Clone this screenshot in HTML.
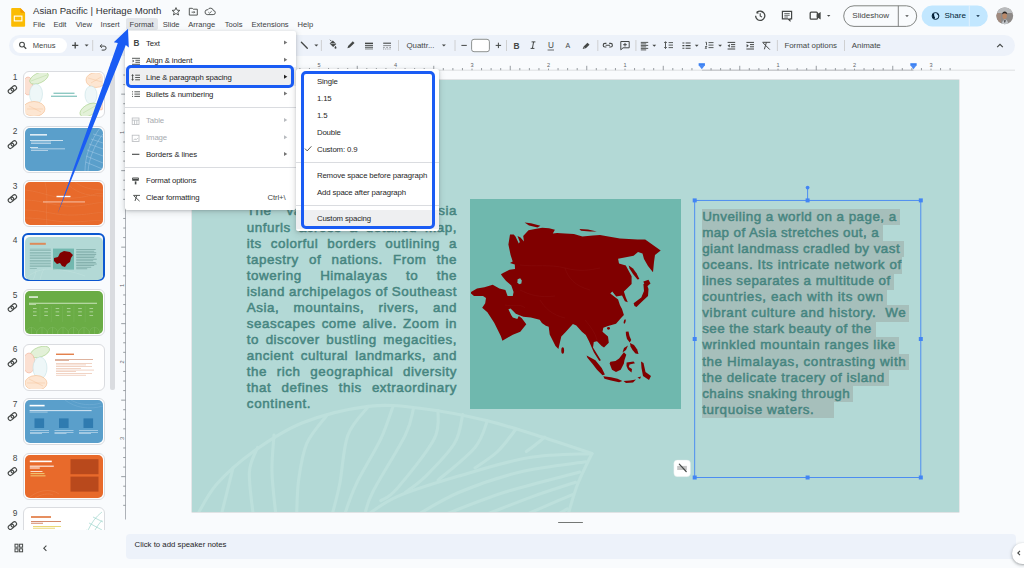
<!DOCTYPE html>
<html><head><meta charset="utf-8"><style>
*{box-sizing:border-box;margin:0;padding:0}
html,body{width:1024px;height:568px;overflow:hidden;background:#f9fbfd;font-family:"Liberation Sans",sans-serif;color:#3c4043;position:relative}
.a{position:absolute}
.t{position:absolute;white-space:pre;line-height:1}
svg{position:absolute;overflow:visible}

</style></head><body>
<!-- logo -->
<svg style="left:0;top:0" width="40" height="40" viewBox="0 0 40 40">
<path d="M12.2 8h8.1l4.8 4.8v13a1 1 0 0 1-1 1H12.2a1 1 0 0 1-1-1V9a1 1 0 0 1 1-1z" fill="#fbbc04"/>
<path d="M20.3 8l4.8 4.8h-3.8a1 1 0 0 1-1-1z" fill="#f29900"/>
<rect x="14.3" y="16.1" width="7.6" height="4.8" fill="none" stroke="#fff" stroke-width="1.1"/>
</svg>
<div class="t" style="left:33px;top:5.5px;font-size:9.6px;color:#303134">Asian Pacific | Heritage Month</div>
<!-- star folder cloud -->
<svg style="left:0;top:0" width="230" height="30" viewBox="0 0 230 30">
<path d="M176 7.6l1.1 2.6 2.8.2-2.1 1.8.7 2.8-2.5-1.5-2.5 1.5.7-2.8-2.1-1.8 2.8-.2z" fill="none" stroke="#444746" stroke-width="0.9" stroke-linejoin="round"/>
<path d="M189.3 8.3h3l.9.9h4.1v5.9h-8z" fill="none" stroke="#444746" stroke-width="0.9"/>
<path d="M191.6 12.2h3M193.8 11.2l1 1-1 1" fill="none" stroke="#444746" stroke-width="0.8"/>
<path d="M207.2 14.6h6a2 2 0 0 0 .2-4 3 3 0 0 0-5.6-.9 2.4 2.4 0 0 0-.6 4.9z" fill="none" stroke="#444746" stroke-width="0.9"/>
<path d="M208.4 12.2l1.2 1 2.1-2" fill="none" stroke="#444746" stroke-width="0.8"/>
</svg>
<!-- menu bar -->
<div class="a" style="left:126px;top:18.3px;width:32px;height:11.5px;background:#e3e6ea;border-radius:2px"></div>
<div class="t" style="left:33px;top:21px;font-size:7.6px;color:#3c4043">File</div>
<div class="t" style="left:53.4px;top:21px;font-size:7.6px;color:#3c4043">Edit</div>
<div class="t" style="left:75.7px;top:21px;font-size:7.6px;color:#3c4043">View</div>
<div class="t" style="left:100.6px;top:21px;font-size:7.6px;color:#3c4043">Insert</div>
<div class="t" style="left:129.6px;top:21px;font-size:7.6px;color:#3c4043">Format</div>
<div class="t" style="left:162.7px;top:21px;font-size:7.6px;color:#3c4043">Slide</div>
<div class="t" style="left:188.2px;top:21px;font-size:7.6px;color:#3c4043">Arrange</div>
<div class="t" style="left:224.8px;top:21px;font-size:7.6px;color:#3c4043">Tools</div>
<div class="t" style="left:251.5px;top:21px;font-size:7.6px;color:#3c4043">Extensions</div>
<div class="t" style="left:297.5px;top:21px;font-size:7.6px;color:#3c4043">Help</div>
<!-- right icons -->
<svg style="left:0;top:0" width="1024" height="35" viewBox="0 0 1024 35">
<g fill="none" stroke="#444746" stroke-width="1.3">
<path d="M755.6 15.8a4.6 4.6 0 1 0 1.4-3.3"/>
<path d="M757.5 11.3l-.6 1.5 1.6.4" stroke-width="1.1"/>
<path d="M760.2 13.3v2.7l1.8 1.1" stroke-width="1.1"/>
<path d="M782.4 11.4h9.2v7.4h-1.7v1.8l-1.9-1.8h-5.6z" stroke-width="1.2"/>
<path d="M784.3 13.6h5.4M784.3 15.3h5.4M784.3 17h3.6" stroke-width="0.8"/>
<rect x="810.2" y="12.2" width="7.2" height="7" rx="1"/>
<path d="M817.4 14.8l2.6-1.7v5.2l-2.6-1.7z" fill="#444746"/>
</g>
<path d="M827 15l1.7 1.7 1.7-1.7z" fill="#444746"/>
<rect x="843.7" y="5.8" width="73" height="20.6" rx="10.3" fill="none" stroke="#747775" stroke-width="0.9"/>
<line x1="898.3" y1="5.8" x2="898.3" y2="26.4" stroke="#747775" stroke-width="0.9"/>
<path d="M905.2 15.2l1.8 1.8 1.8-1.8z" fill="#444746"/>
<path d="M921.6 16a10.4 10.4 0 0 1 10.4-10.4h45.4a10.4 10.4 0 0 1 0 20.8H932a10.4 10.4 0 0 1-10.4-10.4z" fill="#c2e7ff"/>
<line x1="969.3" y1="5.6" x2="969.3" y2="26.4" stroke="#f9fbfd" stroke-width="0.9" opacity="0.6"/>
<path d="M976.2 15.2l1.8 1.8 1.8-1.8z" fill="#001d35"/>
<circle cx="935.5" cy="16" r="3.4" fill="none" stroke="#001d35" stroke-width="1"/><path d="M933 13.6c1 .3 1.4 1 1.2 1.8-.2.8.7 1.2.8 1.9.1.6-.3 1.3-.6 1.6l-1.6-1.2-.6-2.6zM937.6 13.2c-.6.6-.5 1.4.1 1.7.6.3 1.2.4 1.4 1.1" fill="#001d35"/>
<defs><clipPath id="av"><circle cx="1004.8" cy="15.8" r="8.4"/></clipPath></defs>
<g clip-path="url(#av)">
<rect x="996" y="7" width="18" height="18" fill="#8e8a88"/>
<rect x="996" y="7" width="18" height="6" fill="#b9bbbd"/>
<rect x="996" y="13" width="5" height="12" fill="#a08a7e"/>
<path d="M1001.5 25c.5-3.5 1.7-5.5 3.5-5.5s3.2 2 3.6 5.5z" fill="#c2c6ca"/>
<ellipse cx="1004.6" cy="16" rx="2.3" ry="3" fill="#b98868"/>
<path d="M1002.2 14.2c0-2 1.1-2.8 2.5-2.8s2.5.8 2.5 2.8c-.8-.6-1.6-.9-2.5-.9s-1.7.3-2.5.9z" fill="#2a2624"/>
<path d="M1003.6 20.2l1.2 3 1.2-3z" fill="#4a4a4c"/>
</g>
</svg>
<div class="t" style="left:852.3px;top:12.2px;font-size:8.1px;color:#444746">Slideshow</div>
<div class="t" style="left:944.4px;top:12.2px;font-size:8.1px;color:#001d35">Share</div>
<div class="a" style="left:9px;top:35px;width:1006px;height:21px;background:#edf2fa;border-radius:10.5px"></div>
<div class="a" style="left:13.3px;top:37.9px;width:53.3px;height:15px;background:#fff;border-radius:7.5px"></div>
<div class="t" style="left:32.7px;top:41.7px;font-size:7.6px;color:#444746">Menus</div>
<div class="t" style="left:784.4px;top:41.5px;font-size:7.9px;color:#444746">Format options</div>
<div class="t" style="left:851.8px;top:41.5px;font-size:7.9px;color:#444746">Animate</div>
<div class="t" style="left:406.4px;top:41.5px;font-size:7.9px;color:#444746">Quattr...</div>
<svg style="left:0;top:0" width="1024" height="60" viewBox="0 0 1024 60">
<g fill="none" stroke="#444746" stroke-width="1.1">
<circle cx="22" cy="44.6" r="2.4"/><path d="M23.8 46.4l2.4 2.4" stroke-width="1.3"/>
<path d="M72.1 45.4h6.2M75.2 42.3v6.2" stroke-width="1.3"/>
<path d="M100.5 46.1h3.6a2 2 0 0 1 0 4h-2.4" stroke-width="1"/>
<path d="M101.8 44.3l-1.6 1.8 1.6 1.8" stroke-width="1"/>
<path d="M301.4 42.3l5.9 5.9" stroke-width="1.3" stroke-linecap="round"/>
<path d="M329.6 43.6l3.2-3.2 3.5 3.5-3.2 3.2z" fill="#444746" stroke="none"/><path d="M331.4 41.2l-1.4-1.4" stroke-width="0.9"/><path d="M330.6 43.6h5" stroke="#edf2fa" stroke-width="0.6"/>
<path d="M347.4 48.3l.7-2.4 4.7-4.7 1.7 1.7-4.7 4.7z" fill="#444746" stroke="none"/>
<path d="M365 43.4h8" stroke-width="1.5"/><path d="M365 45.7h8" stroke-width="1.1"/><path d="M365 47.6h8" stroke-width="0.8"/><path d="M365 49h8" stroke-width="0.6"/>
<path d="M383.2 43.2h7.8" stroke-width="1.1"/><path d="M383.2 45.6h7.8M383.2 47.4h1.5M386.3 47.4h1.5M389.4 47.4h1.5M383.2 49h1M385.3 49h1M387.4 49h1M389.5 49h1" stroke-width="0.6"/>
<path d="M461.4 45.4h5.4M495.7 45.4h5.4M498.4 42.7v5.4" stroke-width="1"/>
</g>
<g fill="#444746">
<path d="M84.6 44.4h4l-2 2z"/>
<path d="M314.3 44.4h4l-2 2z"/>
<path d="M335.5 45.8c.7.9 1 1.5 1 1.9a1 1 0 0 1-2 0c0-.4.3-1 1-1.9z"/>
<path d="M441.9 44.4h4l-2 2z"/>
<path d="M652.4 44.8h3.8l-1.9 1.9z"/>
<path d="M694.8 44.8h3.8l-1.9 1.9z"/>
<path d="M718.2 44.8h3.8l-1.9 1.9z"/>
</g>
<rect x="471.6" y="39.3" width="17.8" height="12.4" rx="2.4" fill="#fff" stroke="#747775" stroke-width="0.8"/>
<g stroke="#c7c7c7" stroke-width="0.8"><line x1="92.7" y1="40" x2="92.7" y2="51"/><line x1="321.4" y1="40" x2="321.4" y2="51"/><line x1="398.5" y1="40" x2="398.5" y2="51"/><line x1="455" y1="40" x2="455" y2="51"/><line x1="506.5" y1="40" x2="506.5" y2="51"/><line x1="597.8" y1="40" x2="597.8" y2="51"/><line x1="635.9" y1="40" x2="635.9" y2="51"/><line x1="777.4" y1="40" x2="777.4" y2="51"/><line x1="844.5" y1="40" x2="844.5" y2="51"/></g>
<text x="513.6" y="48.8" font-family="Liberation Sans" font-weight="bold" font-size="8.4" fill="#444746">B</text>
<path d="M531.6 41.9h3.8M530.6 48.4h3.8M533.6 41.9l-1.2 6.5" fill="none" stroke="#444746" stroke-width="1"/>
<text x="548" y="48" font-family="Liberation Sans" font-size="8.2" fill="#444746">U</text>
<line x1="547.6" y1="50" x2="554" y2="50" stroke="#444746" stroke-width="0.8"/>
<text x="565.6" y="47.6" font-family="Liberation Sans" font-size="7" fill="#444746">A</text>
<g fill="none" stroke="#444746" stroke-width="1">
<path d="M583.6 46.6l3.9-3.9 2 2-3.9 3.9z" fill="#444746" stroke="none"/><path d="M583.6 46.6l-.9 2.5 2.5-.9" fill="#444746" stroke="none"/>
<path d="M606.4 43.4h-1.4a1.8 1.8 0 0 0 0 3.6h1.4M609.2 43.4h1.4a1.8 1.8 0 0 1 0 3.6h-1.4M605.6 45.2h4.4" stroke-width="1.1"/>
<path d="M620.8 41.5h8.4v6.3h-6.2l-2.2 2z"/><path d="M625 42.9v3.6M623.2 44.7h3.6"/>
<path d="M640.8 42.4h7.4M640.8 43.9h5.4M640.8 45.4h7.4M640.8 46.9h5.4M640.8 48.4h7.4M640.8 49.9h5.4" stroke-width="0.9"/>
<path d="M665.5 41.8v6.6M664.2 43l1.3-1.3 1.3 1.3M664.2 47.2l1.3 1.3 1.3-1.3M668.6 42.6h4.4M668.6 45.1h4.4M668.6 47.6h4.4" stroke-width="0.9"/>
<path d="M682.4 43h2M682.4 45.6h2M682.4 48.2h2M685.6 43h5M685.6 45.6h5M685.6 48.2h5" stroke-width="1.1"/>
<path d="M705.5 42.3h1v3M705.2 46.5h1.6l-1.6 1.8h1.6M708.5 42.6h5M708.5 45.1h5M708.5 47.6h5" stroke-width="0.9"/>
<path d="M727.6 42.4h7.6M731 44.6h4.2M731 46.8h4.2M727.6 49h7.6" stroke-width="1"/><path d="M729.8 44l-2.2 1.7 2.2 1.7z" fill="#444746" stroke="none"/>
<path d="M746.4 42.4h7.6M750 44.6h4M750 46.8h4M746.4 49h7.6" stroke-width="1"/><path d="M746.6 44l2.2 1.7-2.2 1.7z" fill="#444746" stroke="none"/>
<path d="M762.5 42.3h7.8M766.4 42.3l-2 7M763 42.8l6.8 6.8" stroke-width="1"/>
<path d="M997.2 47.2l2.8-2.8 2.8 2.8" stroke-width="1.2"/>
</g>
</svg>
<div class="a" style="left:0;top:62px;width:110px;height:467.5px;overflow:hidden">
<div class="t" style="left:9.5px;top:10.5px;font-size:8.4px;color:#444746;width:8px;text-align:right">1</div>
<div class="a" style="left:0;top:9.2px;width:30px;height:30px"><svg style="left:0;top:0" width="30" height="30"><g transform="translate(12.4 18.6) rotate(-40)" fill="none" stroke="#444746" stroke-width="1.1"><rect x="-4.8" y="-2.1" width="6" height="4.2" rx="2.1"/><rect x="-1.2" y="-2.1" width="6" height="4.2" rx="2.1"/></g></svg></div>
<div class="a" style="left:22.9px;top:9.2px;width:81.7px;height:47.3px;border:1px solid #dadce0;border-radius:6px;background:#fff"></div>
<div class="a" style="left:24.8px;top:11.2px;width:77.8px;height:43.3px;border-radius:5px;overflow:hidden" id="th1"><div class="a" style="left:0;top:0;width:77.8px;height:43.3px;background:#fff"></div>
<svg style="left:0;top:0" width="77.8" height="43.3" viewBox="0 0 77.8 43.3">
<g stroke-width="0.5">
<ellipse cx="3" cy="13" rx="5" ry="9" fill="#fbe0d2" stroke="#f0a58a"/>
<ellipse cx="14" cy="5" rx="10" ry="5" fill="#e3f1d8" stroke="#9ccb7a" transform="rotate(-25 14 5)"/>
<ellipse cx="11" cy="21" rx="6.5" ry="10" fill="#eef7f8" stroke="#bcdde0"/>
<ellipse cx="9" cy="36" rx="11" ry="7.5" fill="#fde6d2" stroke="#f2b17a"/>
<ellipse cx="71" cy="7" rx="10" ry="7.5" fill="#fde6d2" stroke="#f2b17a"/>
<ellipse cx="66" cy="22" rx="6" ry="9" fill="#eef7f8" stroke="#bcdde0"/>
<ellipse cx="64" cy="37" rx="10" ry="5.5" fill="#e3f1d8" stroke="#9ccb7a" transform="rotate(-30 64 37)"/>
<ellipse cx="76" cy="31" rx="3" ry="6" fill="#fbe0d2" stroke="#f0a58a"/>
</g>
<g fill="none" stroke="#f2b17a" stroke-width="0.3"><path d="M2 36h16M4 33l12 6M63 5l14 4M66 10l10-6"/></g>
<g fill="none" stroke="#9ccb7a" stroke-width="0.3"><path d="M6 8l16-6M58 40l14-8"/></g>
<rect x="28.5" y="19.6" width="21" height="1.4" fill="#8fc9c3"/>
<rect x="26" y="22.6" width="26" height="1.4" fill="#8fc9c3"/>
</svg></div>
<div class="t" style="left:9.5px;top:65.0px;font-size:8.4px;color:#444746;width:8px;text-align:right">2</div>
<div class="a" style="left:0;top:63.7px;width:30px;height:30px"><svg style="left:0;top:0" width="30" height="30"><g transform="translate(12.4 18.6) rotate(-40)" fill="none" stroke="#444746" stroke-width="1.1"><rect x="-4.8" y="-2.1" width="6" height="4.2" rx="2.1"/><rect x="-1.2" y="-2.1" width="6" height="4.2" rx="2.1"/></g></svg></div>
<div class="a" style="left:22.9px;top:63.7px;width:81.7px;height:47.3px;border:1px solid #dadce0;border-radius:6px;background:#fff"></div>
<div class="a" style="left:24.8px;top:65.7px;width:77.8px;height:43.3px;border-radius:5px;overflow:hidden" id="th2"><div class="a" style="left:0;top:0;width:77.8px;height:43.3px;background:#5a9fcb"></div>
<svg style="left:0;top:0" width="77.8" height="43.3" viewBox="0 0 77.8 43.3">
<g fill="none" stroke="#a6cde8" stroke-width="0.5"><path d="M60 43.3C60 28 66 12 75 0M63 43.3C64 30 70 16 78 6M68 6l10 3M66 11l12 4M64 16l14 5M62 22l16 6M61 28l17 7M60.5 34l17 7"/></g>
<rect x="5" y="6.2" width="17" height="1.3" fill="#fff"/>
<rect x="5" y="12" width="33" height="0.7" fill="#fff"/>
<rect x="6" y="13.7" width="20" height="0.6" fill="#e8f1f8"/>
<rect x="6" y="15.2" width="20" height="0.6" fill="#e8f1f8"/>
<rect x="5" y="19" width="8" height="0.7" fill="#fff"/>
<rect x="6" y="20.6" width="34" height="0.6" fill="#e8f1f8"/>
<rect x="6" y="22.1" width="17" height="0.6" fill="#e8f1f8"/>
</svg></div>
<div class="t" style="left:9.5px;top:119.5px;font-size:8.4px;color:#444746;width:8px;text-align:right">3</div>
<div class="a" style="left:0;top:118.2px;width:30px;height:30px"><svg style="left:0;top:0" width="30" height="30"><g transform="translate(12.4 18.6) rotate(-40)" fill="none" stroke="#444746" stroke-width="1.1"><rect x="-4.8" y="-2.1" width="6" height="4.2" rx="2.1"/><rect x="-1.2" y="-2.1" width="6" height="4.2" rx="2.1"/></g></svg></div>
<div class="a" style="left:22.9px;top:118.2px;width:81.7px;height:47.3px;border:1px solid #dadce0;border-radius:6px;background:#fff"></div>
<div class="a" style="left:24.8px;top:120.2px;width:77.8px;height:43.3px;border-radius:5px;overflow:hidden" id="th3"><div class="a" style="left:0;top:0;width:77.8px;height:43.3px;background:#e86a2b"></div>
<svg style="left:0;top:0" width="77.8" height="43.3" viewBox="0 0 77.8 43.3">
<g fill="none" stroke="#ec8450" stroke-width="0.35"><path d="M20 0C24 15 20 30 22 43M0 8c20 2 30 10 50 8s20-6 28-4M0 18c18 0 34 8 52 6s20-4 26-3M0 28c20 0 30 6 50 5s20-3 28-2M0 36c20 0 34 5 50 4s20-2 28-1M40 0c10 10 20 14 38 14M50 0c8 6 18 8 28 8"/></g>
<rect x="31.5" y="13.8" width="14" height="1.4" fill="#fff"/>
<rect x="18" y="19.6" width="42" height="0.7" fill="#fde7dc"/>
</svg></div>
<div class="t" style="left:9.5px;top:174.0px;font-size:8.4px;color:#444746;width:8px;text-align:right">4</div>
<div class="a" style="left:22.2px;top:171.3px;width:82.8px;height:48.1px;border:2px solid #0b57d0;border-radius:6px"></div>
<div class="a" style="left:24.8px;top:174.7px;width:77.8px;height:43.3px;border-radius:5px;overflow:hidden" id="th4"><div class="a" style="left:0;top:0;width:77.8px;height:43.3px;background:#b3d9d6"></div>
<svg style="left:0;top:0" width="77.8" height="43.3" viewBox="0 0 77.8 43.3">
<rect x="4.8" y="5.8" width="16" height="2" fill="#dd8a5a"/>
<g fill="#7aa8a4"><rect x="4.8" y="11.8" width="21" height="0.6"/><rect x="4.8" y="13.4" width="21" height="0.6"/><rect x="4.8" y="15.0" width="21" height="0.6"/><rect x="4.8" y="16.6" width="21" height="0.6"/><rect x="4.8" y="18.2" width="21" height="0.6"/><rect x="4.8" y="19.8" width="21" height="0.6"/><rect x="4.8" y="21.4" width="21" height="0.6"/><rect x="4.8" y="23.0" width="21" height="0.6"/><rect x="4.8" y="24.6" width="21" height="0.6"/><rect x="4.8" y="26.2" width="21" height="0.6"/><rect x="4.8" y="27.8" width="21" height="0.6"/><rect x="4.8" y="29.4" width="21" height="0.6"/><rect x="4.8" y="31.0" width="7" height="0.6"/><rect x="51.2" y="12.2" width="19.5" height="0.8"/><rect x="51.2" y="13.8" width="18" height="0.8"/><rect x="51.2" y="15.4" width="20" height="0.8"/><rect x="51.2" y="17.0" width="20" height="0.8"/><rect x="51.2" y="18.6" width="19" height="0.8"/><rect x="51.2" y="20.2" width="18" height="0.8"/><rect x="51.2" y="21.8" width="20.5" height="0.8"/><rect x="51.2" y="23.4" width="17" height="0.8"/><rect x="51.2" y="25.0" width="19.5" height="0.8"/><rect x="51.2" y="26.6" width="20.5" height="0.8"/><rect x="51.2" y="28.2" width="18" height="0.8"/><rect x="51.2" y="29.8" width="15" height="0.8"/><rect x="51.2" y="31.4" width="11" height="0.8"/></g>
<rect x="28" y="11.6" width="21" height="21" fill="#72b8af"/>
<path d="M29 21l4-1 2-4 4-2 6 1 3 3-2 3-1 4-3 2-2 3-3-1-2-3-3 1-3-3z" fill="#800000"/>
<g fill="none" stroke="#c2e2df" stroke-width="0.5"><path d="M0 43C5 36 15 32 25 32s25 3 35 7M8 43c2-4 3-8 3-11M15 43c1-4 2-8 4-11"/></g>
</svg></div>
<div class="t" style="left:9.5px;top:228.5px;font-size:8.4px;color:#444746;width:8px;text-align:right">5</div>
<div class="a" style="left:0;top:227.2px;width:30px;height:30px"><svg style="left:0;top:0" width="30" height="30"><g transform="translate(12.4 18.6) rotate(-40)" fill="none" stroke="#444746" stroke-width="1.1"><rect x="-4.8" y="-2.1" width="6" height="4.2" rx="2.1"/><rect x="-1.2" y="-2.1" width="6" height="4.2" rx="2.1"/></g></svg></div>
<div class="a" style="left:22.9px;top:227.2px;width:81.7px;height:47.3px;border:1px solid #dadce0;border-radius:6px;background:#fff"></div>
<div class="a" style="left:24.8px;top:229.2px;width:77.8px;height:43.3px;border-radius:5px;overflow:hidden" id="th5"><div class="a" style="left:0;top:0;width:77.8px;height:43.3px;background:#6aac45"></div>
<svg style="left:0;top:0" width="77.8" height="43.3" viewBox="0 0 77.8 43.3">
<rect x="4" y="5.4" width="9" height="1.3" fill="#fff"/>
<rect x="4" y="11.8" width="68" height="0.8" fill="#e4f2dc"/>
<rect x="4" y="13.2" width="7" height="0.6" fill="#e4f2dc"/>
<rect x="8.0" y="17.0" width="3.6" height="0.6" fill="#d6ebca"/><rect x="8.0" y="20.6" width="3.6" height="0.6" fill="#d6ebca"/><rect x="8.0" y="24.2" width="3.6" height="0.6" fill="#d6ebca"/><rect x="19.3" y="17.0" width="3.6" height="0.6" fill="#d6ebca"/><rect x="19.3" y="20.6" width="3.6" height="0.6" fill="#d6ebca"/><rect x="19.3" y="24.2" width="3.6" height="0.6" fill="#d6ebca"/><rect x="30.6" y="17.0" width="3.6" height="0.6" fill="#d6ebca"/><rect x="30.6" y="20.6" width="3.6" height="0.6" fill="#d6ebca"/><rect x="30.6" y="24.2" width="3.6" height="0.6" fill="#d6ebca"/><rect x="41.9" y="17.0" width="3.6" height="0.6" fill="#d6ebca"/><rect x="41.9" y="20.6" width="3.6" height="0.6" fill="#d6ebca"/><rect x="41.9" y="24.2" width="3.6" height="0.6" fill="#d6ebca"/><rect x="53.2" y="17.0" width="3.6" height="0.6" fill="#d6ebca"/><rect x="53.2" y="20.6" width="3.6" height="0.6" fill="#d6ebca"/><rect x="53.2" y="24.2" width="3.6" height="0.6" fill="#d6ebca"/><rect x="64.5" y="17.0" width="3.6" height="0.6" fill="#d6ebca"/><rect x="64.5" y="20.6" width="3.6" height="0.6" fill="#d6ebca"/><rect x="64.5" y="24.2" width="3.6" height="0.6" fill="#d6ebca"/><line x1="15.0" y1="15" x2="15.0" y2="31" stroke="#86bd68" stroke-width="0.3"/><line x1="26.3" y1="15" x2="26.3" y2="31" stroke="#86bd68" stroke-width="0.3"/><line x1="37.6" y1="15" x2="37.6" y2="31" stroke="#86bd68" stroke-width="0.3"/><line x1="48.9" y1="15" x2="48.9" y2="31" stroke="#86bd68" stroke-width="0.3"/><line x1="60.2" y1="15" x2="60.2" y2="31" stroke="#86bd68" stroke-width="0.3"/>
<g fill="none" stroke="#8cc36e" stroke-width="0.4"><path d="M1.0 43.3c0-4 3-7 5.5-7s5.5 3 5.5 7M6.5 36.3v7"/><path d="M11.5 43.3c0-4 3-7 5.5-7s5.5 3 5.5 7M17.0 36.3v7"/><path d="M22.0 43.3c0-4 3-7 5.5-7s5.5 3 5.5 7M27.5 36.3v7"/><path d="M32.5 43.3c0-4 3-7 5.5-7s5.5 3 5.5 7M38.0 36.3v7"/><path d="M43.0 43.3c0-4 3-7 5.5-7s5.5 3 5.5 7M48.5 36.3v7"/><path d="M53.5 43.3c0-4 3-7 5.5-7s5.5 3 5.5 7M59.0 36.3v7"/><path d="M64.0 43.3c0-4 3-7 5.5-7s5.5 3 5.5 7M69.5 36.3v7"/><path d="M74.5 43.3c0-4 3-7 5.5-7s5.5 3 5.5 7M80.0 36.3v7"/></g>
</svg></div>
<div class="t" style="left:9.5px;top:283.0px;font-size:8.4px;color:#444746;width:8px;text-align:right">6</div>
<div class="a" style="left:0;top:281.7px;width:30px;height:30px"><svg style="left:0;top:0" width="30" height="30"><g transform="translate(12.4 18.6) rotate(-40)" fill="none" stroke="#444746" stroke-width="1.1"><rect x="-4.8" y="-2.1" width="6" height="4.2" rx="2.1"/><rect x="-1.2" y="-2.1" width="6" height="4.2" rx="2.1"/></g></svg></div>
<div class="a" style="left:22.9px;top:281.7px;width:81.7px;height:47.3px;border:1px solid #dadce0;border-radius:6px;background:#fff"></div>
<div class="a" style="left:24.8px;top:283.7px;width:77.8px;height:43.3px;border-radius:5px;overflow:hidden" id="th6"><div class="a" style="left:0;top:0;width:77.8px;height:43.3px;background:#fff"></div>
<svg style="left:0;top:0" width="77.8" height="43.3" viewBox="0 0 77.8 43.3">
<g stroke-width="0.5">
<ellipse cx="15" cy="6" rx="10" ry="5" fill="#e3f1d8" stroke="#9ccb7a" transform="rotate(-20 15 6)"/>
<ellipse cx="4" cy="17" rx="6" ry="10" fill="#fbe0d2" stroke="#f0a58a"/>
<ellipse cx="15" cy="22" rx="7" ry="11" fill="#eef7f8" stroke="#bcdde0"/>
<ellipse cx="11" cy="37" rx="11" ry="7.5" fill="#fde6d2" stroke="#f2b17a"/>
</g>
<g fill="none" stroke="#f2b17a" stroke-width="0.3"><path d="M2 37h18M4 33l14 7"/></g>
<rect x="31" y="7.6" width="18" height="1.3" fill="#e0743a"/>
<rect x="30" y="13" width="38" height="0.6" fill="#c8805f"/>
<rect x="30" y="14.3" width="14" height="0.6" fill="#c8805f"/>
<rect x="31" y="17.0" width="36" height="0.5" fill="#e3a88a"/><rect x="31" y="18.7" width="30" height="0.5" fill="#e3a88a"/><rect x="31" y="20.4" width="36" height="0.5" fill="#e3a88a"/><rect x="31" y="22.1" width="25" height="0.5" fill="#e3a88a"/><rect x="31" y="23.8" width="38" height="0.5" fill="#e3a88a"/><rect x="31" y="25.5" width="20" height="0.5" fill="#e3a88a"/><rect x="31" y="27.2" width="36" height="0.5" fill="#e3a88a"/><rect x="31" y="28.9" width="30" height="0.5" fill="#e3a88a"/>
</svg></div>
<div class="t" style="left:9.5px;top:337.5px;font-size:8.4px;color:#444746;width:8px;text-align:right">7</div>
<div class="a" style="left:0;top:336.2px;width:30px;height:30px"><svg style="left:0;top:0" width="30" height="30"><g transform="translate(12.4 18.6) rotate(-40)" fill="none" stroke="#444746" stroke-width="1.1"><rect x="-4.8" y="-2.1" width="6" height="4.2" rx="2.1"/><rect x="-1.2" y="-2.1" width="6" height="4.2" rx="2.1"/></g></svg></div>
<div class="a" style="left:22.9px;top:336.2px;width:81.7px;height:47.3px;border:1px solid #dadce0;border-radius:6px;background:#fff"></div>
<div class="a" style="left:24.8px;top:338.2px;width:77.8px;height:43.3px;border-radius:5px;overflow:hidden" id="th7"><div class="a" style="left:0;top:0;width:77.8px;height:43.3px;background:#5a9fcb"></div>
<svg style="left:0;top:0" width="77.8" height="43.3" viewBox="0 0 77.8 43.3">
<g fill="none" stroke="#84b8dc" stroke-width="0.4"><path d="M40 0c10 8 25 10 38 6M46 0c8 5 20 6 30 3"/></g>
<rect x="4.6" y="4.8" width="15" height="1.6" fill="#fff"/>
<rect x="4.6" y="10.2" width="62" height="0.9" fill="#e8f1f8"/>
<rect x="4.6" y="11.8" width="18" height="0.5" fill="#e8f1f8"/>
<rect x="9.5" y="18.4" width="9.6" height="9.6" fill="#2f7bb0"/>
<rect x="34" y="18.4" width="9.6" height="9.6" fill="#2f7bb0"/>
<rect x="58.5" y="18.4" width="9.6" height="9.6" fill="#2f7bb0"/>
<rect x="5.0" y="30.5" width="19" height="0.5" fill="#e8f1f8"/><rect x="5.0" y="32.0" width="19" height="0.5" fill="#e8f1f8"/><rect x="5.0" y="33.5" width="12" height="0.5" fill="#e8f1f8"/><rect x="29.5" y="30.5" width="19" height="0.5" fill="#e8f1f8"/><rect x="29.5" y="32.0" width="19" height="0.5" fill="#e8f1f8"/><rect x="29.5" y="33.5" width="12" height="0.5" fill="#e8f1f8"/><rect x="54.0" y="30.5" width="19" height="0.5" fill="#e8f1f8"/><rect x="54.0" y="32.0" width="19" height="0.5" fill="#e8f1f8"/><rect x="54.0" y="33.5" width="12" height="0.5" fill="#e8f1f8"/>
</svg></div>
<div class="t" style="left:9.5px;top:392.0px;font-size:8.4px;color:#444746;width:8px;text-align:right">8</div>
<div class="a" style="left:0;top:390.7px;width:30px;height:30px"><svg style="left:0;top:0" width="30" height="30"><g transform="translate(12.4 18.6) rotate(-40)" fill="none" stroke="#444746" stroke-width="1.1"><rect x="-4.8" y="-2.1" width="6" height="4.2" rx="2.1"/><rect x="-1.2" y="-2.1" width="6" height="4.2" rx="2.1"/></g></svg></div>
<div class="a" style="left:22.9px;top:390.7px;width:81.7px;height:47.3px;border:1px solid #dadce0;border-radius:6px;background:#fff"></div>
<div class="a" style="left:24.8px;top:392.7px;width:77.8px;height:43.3px;border-radius:5px;overflow:hidden" id="th8"><div class="a" style="left:0;top:0;width:77.8px;height:43.3px;background:#e86a2b"></div>
<svg style="left:0;top:0" width="77.8" height="43.3" viewBox="0 0 77.8 43.3">
<rect x="4.8" y="5.6" width="22" height="1.6" fill="#fff"/>
<rect x="4.8" y="10.6" width="24" height="1.2" fill="#fde7dc"/>
<rect x="4.8" y="12.4" width="10" height="1.2" fill="#fde7dc"/>
<rect x="5.5" y="16" width="12" height="0.9" fill="#fde7dc"/>
<rect x="5.5" y="18.2" width="14" height="0.9" fill="#f3d57a"/>
<rect x="5.5" y="20.4" width="15" height="0.9" fill="#f3d57a"/>
<rect x="45.5" y="4.2" width="28" height="15" fill="#b9491c"/>
<rect x="45.5" y="21.6" width="28" height="15" fill="#b9491c"/>
<g fill="none" stroke="#ee8a55" stroke-width="0.4"><path d="M4 43c8-8 22-10 30-4M10 43c6-4 14-5 18-3"/></g>
</svg></div>
<div class="t" style="left:9.5px;top:446.5px;font-size:8.4px;color:#444746;width:8px;text-align:right">9</div>
<div class="a" style="left:0;top:445.2px;width:30px;height:30px"><svg style="left:0;top:0" width="30" height="30"><g transform="translate(12.4 18.6) rotate(-40)" fill="none" stroke="#444746" stroke-width="1.1"><rect x="-4.8" y="-2.1" width="6" height="4.2" rx="2.1"/><rect x="-1.2" y="-2.1" width="6" height="4.2" rx="2.1"/></g></svg></div>
<div class="a" style="left:22.9px;top:445.2px;width:81.7px;height:47.3px;border:1px solid #dadce0;border-radius:6px;background:#fff"></div>
<div class="a" style="left:24.8px;top:447.2px;width:77.8px;height:43.3px;border-radius:5px;overflow:hidden" id="th9"><div class="a" style="left:0;top:0;width:77.8px;height:43.3px;background:#fff"></div>
<svg style="left:0;top:0" width="77.8" height="43.3" viewBox="0 0 77.8 43.3">
<rect x="6" y="7.2" width="20" height="1.6" fill="#e0743a"/>
<rect x="6" y="12" width="30" height="0.8" fill="#c86b45"/>
<rect x="6" y="13.8" width="12" height="0.8" fill="#c86b45"/>
<rect x="8" y="17" width="28" height="0.8" fill="#e4cf55"/>
<rect x="8" y="18.8" width="22" height="0.8" fill="#e4cf55"/>
<g fill="none" stroke="#8fcfc4" stroke-width="0.6"><path d="M57 43.3C59 28 65 12 77 3M62 43.3c2-10 6-22 15-32M70 43.3c1-6 3-12 8-18M58 35l8 5M59.5 28l10 6M61.5 21l12 7M64 14l13 7M68 8l10 5"/></g>
</svg></div>
</div>
<div class="a" style="left:110.4px;top:62px;width:4.2px;height:328px;background:#dadce0;border-radius:2px"></div>
<svg style="left:0;top:0" width="60" height="568"><g fill="none" stroke="#444746" stroke-width="1"><rect x="15" y="544.2" width="3" height="3"/><rect x="19.6" y="544.2" width="3" height="3"/><rect x="15" y="548.8" width="3" height="3"/><rect x="19.6" y="548.8" width="3" height="3"/><path d="M46.4 545.6l-2.6 2.6 2.6 2.6" stroke-width="1.1"/></g></svg><svg style="left:0;top:0" width="1024" height="568" viewBox="0 0 1024 568">
<line x1="126" y1="70.2" x2="1015" y2="70.2" stroke="#dadce0" stroke-width="0.9"/><line x1="702" y1="70.2" x2="913.5" y2="70.2" stroke="#b8bcc0" stroke-width="0.9"/>
<path d="M194.69 68V70.2M204.25 65.8V70.2M213.81 68V70.2M223.38 68V70.2M232.94 68V70.2M252.06 68V70.2M261.62 68V70.2M271.19 68V70.2M280.75 65.8V70.2M290.31 68V70.2M299.88 68V70.2M309.44 68V70.2M328.56 68V70.2M338.12 68V70.2M347.69 68V70.2M357.25 65.8V70.2M366.81 68V70.2M376.38 68V70.2M385.94 68V70.2M405.06 68V70.2M414.62 68V70.2M424.19 68V70.2M433.75 65.8V70.2M443.31 68V70.2M452.88 68V70.2M462.44 68V70.2M481.56 68V70.2M491.12 68V70.2M500.69 68V70.2M510.25 65.8V70.2M519.81 68V70.2M529.38 68V70.2M538.94 68V70.2M558.06 68V70.2M567.62 68V70.2M577.19 68V70.2M586.75 65.8V70.2M596.31 68V70.2M605.88 68V70.2M615.44 68V70.2M634.56 68V70.2M644.12 68V70.2M653.69 68V70.2M663.25 65.8V70.2M672.81 68V70.2M682.38 68V70.2M691.94 68V70.2M711.06 68V70.2M720.62 68V70.2M730.19 68V70.2M739.75 65.8V70.2M749.31 68V70.2M758.88 68V70.2M768.44 68V70.2M787.56 68V70.2M797.12 68V70.2M806.69 68V70.2M816.25 65.8V70.2M825.81 68V70.2M835.38 68V70.2M844.94 68V70.2M864.06 68V70.2M873.62 68V70.2M883.19 68V70.2M892.75 65.8V70.2M902.31 68V70.2M911.88 68V70.2M921.44 68V70.2M940.56 68V70.2M950.12 68V70.2" stroke="#80868b" stroke-width="0.8" fill="none"/>
<line x1="242.50" y1="68.6" x2="242.50" y2="70.2" stroke="#80868b" stroke-width="0.8"/>
<line x1="319.00" y1="68.6" x2="319.00" y2="70.2" stroke="#80868b" stroke-width="0.8"/>
<line x1="395.50" y1="68.6" x2="395.50" y2="70.2" stroke="#80868b" stroke-width="0.8"/>
<line x1="472.00" y1="68.6" x2="472.00" y2="70.2" stroke="#80868b" stroke-width="0.8"/>
<line x1="548.50" y1="68.6" x2="548.50" y2="70.2" stroke="#80868b" stroke-width="0.8"/>
<line x1="625.00" y1="68.6" x2="625.00" y2="70.2" stroke="#80868b" stroke-width="0.8"/>
<line x1="778.00" y1="68.6" x2="778.00" y2="70.2" stroke="#80868b" stroke-width="0.8"/>
<line x1="854.50" y1="68.6" x2="854.50" y2="70.2" stroke="#80868b" stroke-width="0.8"/>
<line x1="931.00" y1="68.6" x2="931.00" y2="70.2" stroke="#80868b" stroke-width="0.8"/>
<text x="242.50" y="66.6" font-family="Liberation Sans" font-size="5.6" fill="#5f6368" text-anchor="middle">6</text>
<text x="319.00" y="66.6" font-family="Liberation Sans" font-size="5.6" fill="#5f6368" text-anchor="middle">5</text>
<text x="395.50" y="66.6" font-family="Liberation Sans" font-size="5.6" fill="#5f6368" text-anchor="middle">4</text>
<text x="472.00" y="66.6" font-family="Liberation Sans" font-size="5.6" fill="#5f6368" text-anchor="middle">3</text>
<text x="548.50" y="66.6" font-family="Liberation Sans" font-size="5.6" fill="#5f6368" text-anchor="middle">2</text>
<text x="625.00" y="66.6" font-family="Liberation Sans" font-size="5.6" fill="#5f6368" text-anchor="middle">1</text>
<text x="778.00" y="66.6" font-family="Liberation Sans" font-size="5.6" fill="#5f6368" text-anchor="middle">1</text>
<text x="854.50" y="66.6" font-family="Liberation Sans" font-size="5.6" fill="#5f6368" text-anchor="middle">2</text>
<text x="931.00" y="66.6" font-family="Liberation Sans" font-size="5.6" fill="#5f6368" text-anchor="middle">3</text>
<path d="M698.7 63.4h6.2v1.8l-3.1 4-3.1-4z" fill="#4a8af4"/><path d="M698.7 63.9h6.2" stroke="#1a6ef0" stroke-width="0.8"/>
<path d="M910.4 63.4h6.2v1.8l-3.1 4-3.1-4z" fill="#4a8af4"/><path d="M910.4 63.9h6.2" stroke="#1a6ef0" stroke-width="0.8"/>
<line x1="125.5" y1="72" x2="125.5" y2="519.5" stroke="#9aa0a6" stroke-width="0.8"/>
<text transform="translate(124 132.40) rotate(-90)" font-family="Liberation Sans" font-size="5.6" fill="#5f6368" text-anchor="middle" y="-0.5">1</text>
<text transform="translate(124 285.40) rotate(-90)" font-family="Liberation Sans" font-size="5.6" fill="#5f6368" text-anchor="middle" y="-0.5">1</text>
<text transform="translate(124 361.90) rotate(-90)" font-family="Liberation Sans" font-size="5.6" fill="#5f6368" text-anchor="middle" y="-0.5">2</text>
<text transform="translate(124 438.40) rotate(-90)" font-family="Liberation Sans" font-size="5.6" fill="#5f6368" text-anchor="middle" y="-0.5">3</text>
<path d="M123.2 75.03H125.5M123.2 84.59H125.5M121.2 94.15H125.5M123.2 103.71H125.5M123.2 113.28H125.5M123.2 122.84H125.5M123.2 141.96H125.5M123.2 151.53H125.5M123.2 161.09H125.5M121.2 170.65H125.5M123.2 180.21H125.5M123.2 189.78H125.5M123.2 199.34H125.5M123.2 218.46H125.5M123.2 228.03H125.5M123.2 237.59H125.5M121.2 247.15H125.5M123.2 256.71H125.5M123.2 266.27H125.5M123.2 275.84H125.5M123.2 294.96H125.5M123.2 304.52H125.5M123.2 314.09H125.5M121.2 323.65H125.5M123.2 333.21H125.5M123.2 342.77H125.5M123.2 352.34H125.5M123.2 371.46H125.5M123.2 381.02H125.5M123.2 390.59H125.5M121.2 400.15H125.5M123.2 409.71H125.5M123.2 419.27H125.5M123.2 428.84H125.5M123.2 447.96H125.5M123.2 457.52H125.5M123.2 467.09H125.5M121.2 476.65H125.5M123.2 486.21H125.5M123.2 495.77H125.5M123.2 505.34H125.5" stroke="#80868b" stroke-width="0.8" fill="none"/>
</svg><div class="a" style="left:192px;top:80px;width:767px;height:432px;background:#b3d9d6;overflow:hidden;box-shadow:0 0 0.6px 0.4px rgba(60,64,67,.25)">
<svg style="left:0;top:0" width="767" height="432" viewBox="192 80 767 432"><g fill="none" stroke="#bde0dc" stroke-width="3.1" stroke-linecap="round"><path d="M196.1 517.2C199.5 511.7 207.0 495.3 216.6 484.3C226.2 473.4 239.2 461.8 253.5 451.5C267.9 441.3 283.6 430.3 302.7 422.8C321.9 415.3 348.5 408.8 368.4 406.4C388.2 404.0 401.9 406.1 421.7 408.5C441.5 410.9 466.1 415.6 487.3 420.8C508.5 425.9 531.4 433.8 548.8 439.2C566.3 444.7 584.7 451.2 591.9 453.6"/><path d="M591.9 453.6C589.5 458.7 581.7 473.7 577.6 484.3C573.5 494.9 569.0 511.7 567.3 517.2"/><path d="M591.9 453.6C581.3 454.3 550.6 453.9 528.3 457.7C506.1 461.4 480.5 469.6 458.6 476.1C436.7 482.6 412.8 489.8 397.1 496.6C381.4 503.5 369.7 513.7 364.3 517.2"/><path d="M585.8 461.8C574.8 463.5 541.3 466.9 520.1 472.0C498.9 477.2 476.4 485.0 458.6 492.5C440.8 500.1 421.0 513.1 413.5 517.2"/><path d="M544.7 437.2C543.0 438.5 537.6 443.0 534.5 445.4C531.4 447.8 527.7 450.5 526.3 451.5"/><path d="M516.0 429.0C513.0 432.7 504.4 445.0 497.6 451.5C490.7 458.0 478.8 465.2 475.0 467.9"/><path d="M487.3 420.8C485.3 425.2 483.2 437.5 475.0 447.4C466.8 457.3 444.3 474.8 438.1 480.2"/><path d="M462.7 414.6C461.3 419.4 460.7 433.1 454.5 443.3C448.4 453.6 434.0 467.9 425.8 476.1C417.6 484.3 408.7 489.8 405.3 492.5"/><path d="M438.1 410.5C437.4 415.3 440.8 426.2 434.0 439.2C427.2 452.2 406.0 478.2 397.1 488.4C388.2 498.7 383.4 498.7 380.7 500.7"/><path d="M413.5 408.5C412.1 412.9 412.1 421.1 405.3 435.1C398.5 449.1 379.3 478.9 372.5 492.5C365.6 506.2 365.6 513.1 364.3 517.2"/><path d="M393.0 406.4C390.9 411.9 386.8 426.2 380.7 439.2C374.5 452.2 362.2 471.4 356.1 484.3C349.9 497.3 345.8 511.7 343.8 517.2"/><path d="M368.4 406.4C365.0 411.2 352.7 422.1 347.9 435.1C343.1 448.1 342.4 470.7 339.7 484.3C336.9 498.0 332.8 511.7 331.5 517.2"/><path d="M327.4 414.6C323.9 419.4 311.6 432.4 306.8 443.3C302.1 454.3 300.4 467.9 298.6 480.2C296.9 492.5 296.9 511.0 296.6 517.2"/><path d="M274.0 435.1C273.7 441.3 271.6 458.4 272.0 472.0C272.3 485.7 275.4 509.6 276.1 517.2"/><path d="M257.6 447.4C256.3 451.5 250.1 460.4 249.4 472.0C248.7 483.7 252.8 509.6 253.5 517.2"/><path d="M233.0 467.9C231.0 476.1 222.8 508.9 220.7 517.2"/><path d="M438.1 517.2C449.0 513.1 480.1 500.1 503.7 492.5C527.3 485.0 567.0 475.5 579.6 472.0"/><path d="M479.1 517.2C488.0 513.7 516.4 502.5 532.4 496.6C548.5 490.8 568.3 484.7 575.5 482.3"/><path d="M520.1 517.2C525.6 514.8 544.2 506.6 553.0 502.8C561.7 499.0 569.4 496.0 572.6 494.6"/><path d="M553.0 517.2C555.3 515.8 564.9 510.3 567.3 508.9"/></g></svg>
</div>
<div class="t" style="left:246.8px;top:204.47px;font-size:13.4px;color:#468580;-webkit-text-stroke:0.5px #468580;letter-spacing:0.53px;word-spacing:10.751px">The vast continent of Asia</div>
<div class="t" style="left:246.8px;top:220.52px;font-size:13.4px;color:#468580;-webkit-text-stroke:0.5px #468580;letter-spacing:0.53px;word-spacing:3.896px">unfurls across a detailed map,</div>
<div class="t" style="left:246.8px;top:236.57px;font-size:13.4px;color:#468580;-webkit-text-stroke:0.5px #468580;letter-spacing:0.53px;word-spacing:4.747px">its colorful borders outlining a</div>
<div class="t" style="left:246.8px;top:252.62px;font-size:13.4px;color:#468580;-webkit-text-stroke:0.5px #468580;letter-spacing:0.53px;word-spacing:6.079px">tapestry of nations. From the</div>
<div class="t" style="left:246.8px;top:268.67px;font-size:13.4px;color:#468580;-webkit-text-stroke:0.5px #468580;letter-spacing:0.53px;word-spacing:14.267px">towering Himalayas to the</div>
<div class="t" style="left:246.8px;top:284.72px;font-size:13.4px;color:#468580;-webkit-text-stroke:0.5px #468580;letter-spacing:0.53px;word-spacing:-0.129px">island archipelagos of Southeast</div>
<div class="t" style="left:246.8px;top:300.77px;font-size:13.4px;color:#468580;-webkit-text-stroke:0.5px #468580;letter-spacing:0.53px;word-spacing:10.017px">Asia, mountains, rivers, and</div>
<div class="t" style="left:246.8px;top:316.82px;font-size:13.4px;color:#468580;-webkit-text-stroke:0.5px #468580;letter-spacing:0.53px;word-spacing:1.798px">seascapes come alive. Zoom in</div>
<div class="t" style="left:246.8px;top:332.87px;font-size:13.4px;color:#468580;-webkit-text-stroke:0.5px #468580;letter-spacing:0.53px;word-spacing:2.366px">to discover bustling megacities,</div>
<div class="t" style="left:246.8px;top:348.92px;font-size:13.4px;color:#468580;-webkit-text-stroke:0.5px #468580;letter-spacing:0.53px;word-spacing:2.783px">ancient cultural landmarks, and</div>
<div class="t" style="left:246.8px;top:364.97px;font-size:13.4px;color:#468580;-webkit-text-stroke:0.5px #468580;letter-spacing:0.53px;word-spacing:5.517px">the rich geographical diversity</div>
<div class="t" style="left:246.8px;top:381.02px;font-size:13.4px;color:#468580;-webkit-text-stroke:0.5px #468580;letter-spacing:0.53px;word-spacing:6.012px">that defines this extraordinary</div>
<div class="t" style="left:246.8px;top:397.07px;font-size:13.4px;color:#468580;-webkit-text-stroke:0.5px #468580;letter-spacing:0.636px">continent.</div>
<div class="a" style="left:470.1px;top:198.9px;width:210.7px;height:210.5px;background:#6fb8ae"></div>
<svg style="left:0;top:0" width="1024" height="568" viewBox="0 0 1024 568">
<path d="M471.0 292.1L477.0 288.4L484.4 287.2L492.7 284.7L499.4 288.4L505.4 289.9L507.6 295.9L512.8 295.9L513.6 292.1L511.3 285.4L506.1 280.9L502.4 276.4L500.9 274.2L504.0 272.5L509.5 269.8L515.0 268.9L514.8 264.6L510.0 263.0L512.7 261.5L510.6 255.1L508.4 244.6L510.0 234.5L513.7 234.5L515.5 236.5L518.8 243.5L519.8 242.0L517.5 236.0L520.5 237.5L524.0 241.5L523.2 236.0L528.5 230.3L535.0 229.0L542.2 227.7L549.0 228.2L554.9 229.8L552.8 233.5L557.0 233.0L565.0 233.5L573.9 234.0L582.4 236.6L592.9 235.6L600.0 235.0L608.4 236.5L620.0 238.4L637.5 239.4L645.2 239.4L660.7 250.6L655.0 255.0L654.0 262.0L653.0 272.3L648.0 266.0L644.0 259.0L642.5 253.5L638.0 252.0L633.6 255.8L618.1 258.7L619.0 263.6L625.8 265.5L631.6 276.2L631.6 283.9L627.8 287.8L623.9 291.6L625.8 297.5L627.8 302.3L624.9 301.3L622.0 295.5L616.2 296.5L612.3 291.6L610.3 293.6L618.1 299.4L620.0 305.2L622.0 309.1L623.9 314.9L621.5 317.4L616.0 323.8L608.0 326.1L603.3 327.7L602.5 331.7L608.0 336.5L608.8 342.8L604.0 347.5L601.7 346.0L597.0 341.2L593.8 342.0L593.0 347.5L597.0 353.9L600.9 360.2L599.3 361.0L593.8 352.3L589.0 341.2L585.8 334.9L581.9 331.7L576.3 325.4L572.9 323.9L565.2 332.6L561.3 336.4L558.4 349.0L555.5 346.1L549.7 334.5L548.7 326.8L545.8 325.8L541.9 322.9L539.7 319.8L530.8 317.5L523.3 316.8L515.8 313.8L510.6 308.6L508.4 309.3L511.3 315.3L512.8 317.5L517.3 319.0L518.8 316.1L521.8 318.3L526.3 324.3L520.3 331.7L512.8 334.7L502.4 340.7L500.9 336.2L494.2 322.8L487.4 312.3L482.2 307.8L485.2 303.3L486.0 298.1L483.0 295.9L474.0 295.9L471.0 293.6Z" fill="#800000"/>
<path d="M633.6 303.3L641.3 297.5L644.0 291.0L643.4 284.0L646.5 283.5L648.5 289.0L648.0 296.0L641.3 302.3L636.5 307.1L634.5 306.0Z" fill="#800000"/>
<path d="M643.4 281.5L648.5 279.8L650.5 283.5L647.0 286.5L644.5 284.5Z" fill="#800000"/>
<path d="M628.7 265.5L633.0 268.5L636.5 273.3L639.4 279.0L637.5 279.5L633.0 274.0L629.5 268.5Z" fill="#800000"/>
<path d="M524.6 222.6L531.0 223.2L540.4 225.8L537.5 227.6L529.0 225.5Z" fill="#800000"/>
<path d="M579.4 229.0L588.0 229.5L596.8 231.4L590.0 231.6L581.0 230.8Z" fill="#800000"/>
<path d="M586.6 355.5L595.4 360.2L601.7 368.1L604.9 374.5L602.5 375.3L597.0 369.7L592.2 363.4L587.4 357.8Z" fill="#800000"/>
<path d="M603.3 376.2L611.0 377.2L617.5 378.8L622.3 381.0L619.1 382.2L611.0 380.5L604.5 378.8Z" fill="#800000"/>
<path d="M623.5 381.0L630.0 380.5L636.0 379.5L633.0 382.5L626.0 383.0Z" fill="#800000"/>
<path d="M610.4 361.8L615.5 361.0L619.1 358.6L623.9 352.3L626.3 354.7L624.5 360.0L623.9 363.4L620.7 369.7L616.0 372.1L612.0 369.7L609.6 363.4Z" fill="#800000"/>
<path d="M626.6 362.5L633.5 361.5L635.0 363.3L629.5 364.5L628.8 367.0L632.0 369.0L631.5 372.5L628.0 369.5L626.5 366.0Z" fill="#800000"/>
<path d="M625.8 331.8L628.5 331.5L629.5 336.0L631.2 340.0L629.8 342.5L627.0 339.0L626.0 335.0Z" fill="#800000"/>
<path d="M630.0 343.0L634.0 345.0L637.2 349.5L638.5 354.0L635.5 353.5L632.5 350.0L630.5 346.5Z" fill="#800000"/>
<path d="M624.0 348.0L628.0 345.5L626.0 350.0L622.5 352.5Z" fill="#800000"/>
<path d="M641.0 361.5L643.5 363.0L645.5 372.0L651.0 376.0L649.0 380.0L643.0 376.0L641.5 368.0Z" fill="#800000"/>
<path d="M637.5 377.5L641.0 376.5L640.0 379.0Z" fill="#800000"/>
<ellipse cx="562.7" cy="350.5" rx="1.4" ry="3.3" transform="rotate(0 562.7 350.5)" fill="#800000"/>
<ellipse cx="624.7" cy="321.4" rx="0.9" ry="2.3" transform="rotate(15 624.7 321.4)" fill="#800000"/>
<ellipse cx="608.5" cy="328.3" rx="1.5" ry="1.4" transform="rotate(0 608.5 328.3)" fill="#800000"/>
<path d="M517.6 279.2l2.6-1 1.6 2.2-.4 3.2-2.4.6-1.6-2z" fill="#6fb8ae"/>
<g fill="none" stroke="#8a1414" stroke-width="0.35"><path d="M520 265c15 2 30-1 45 3s25 2 35 0M565 268c3 10 10 18 25 22M520 290c10 5 20 8 35 6M505 305c8 2 15-2 20 3M540 300c5 8 12 15 25 18M585 320c5 6 10 12 12 20"/></g>
</svg>
<div class="a" style="left:702px;top:208.60px;width:197.7px;height:16.7px;background:#a6bfbb"></div>
<div class="a" style="left:702px;top:224.70px;width:180.6px;height:16.7px;background:#a6bfbb"></div>
<div class="a" style="left:702px;top:240.80px;width:201.7px;height:16.7px;background:#a6bfbb"></div>
<div class="a" style="left:702px;top:256.90px;width:200.0px;height:16.7px;background:#a6bfbb"></div>
<div class="a" style="left:702px;top:273.00px;width:191.8px;height:16.7px;background:#a6bfbb"></div>
<div class="a" style="left:702px;top:289.10px;width:184.5px;height:16.7px;background:#a6bfbb"></div>
<div class="a" style="left:702px;top:305.20px;width:207.4px;height:16.7px;background:#a6bfbb"></div>
<div class="a" style="left:702px;top:321.30px;width:174.3px;height:16.7px;background:#a6bfbb"></div>
<div class="a" style="left:702px;top:337.40px;width:197.2px;height:16.7px;background:#a6bfbb"></div>
<div class="a" style="left:702px;top:353.50px;width:207.0px;height:16.7px;background:#a6bfbb"></div>
<div class="a" style="left:702px;top:369.60px;width:186.5px;height:16.7px;background:#a6bfbb"></div>
<div class="a" style="left:702px;top:385.70px;width:150.8px;height:16.7px;background:#a6bfbb"></div>
<div class="a" style="left:702px;top:401.80px;width:131.6px;height:16.1px;background:#a6bfbb"></div>
<div class="t" style="left:702.2px;top:209.67px;font-size:13.4px;color:#468580;-webkit-text-stroke:0.5px #468580;letter-spacing:0.477px">Unveiling a world on a page, a</div>
<div class="t" style="left:702.2px;top:225.77px;font-size:13.4px;color:#468580;-webkit-text-stroke:0.5px #468580;letter-spacing:0.417px">map of Asia stretches out, a</div>
<div class="t" style="left:702.2px;top:241.87px;font-size:13.4px;color:#468580;-webkit-text-stroke:0.5px #468580;letter-spacing:0.470px">giant landmass cradled by vast</div>
<div class="t" style="left:702.2px;top:257.97px;font-size:13.4px;color:#468580;-webkit-text-stroke:0.5px #468580;letter-spacing:0.585px">oceans. Its intricate network of</div>
<div class="t" style="left:702.2px;top:274.07px;font-size:13.4px;color:#468580;-webkit-text-stroke:0.5px #468580;letter-spacing:0.476px">lines separates a multitude of</div>
<div class="t" style="left:702.2px;top:290.17px;font-size:13.4px;color:#468580;-webkit-text-stroke:0.5px #468580;letter-spacing:0.639px">countries, each with its own</div>
<div class="t" style="left:702.2px;top:306.27px;font-size:13.4px;color:#468580;-webkit-text-stroke:0.5px #468580;letter-spacing:0.650px">vibrant culture and history.  We</div>
<div class="t" style="left:702.2px;top:322.37px;font-size:13.4px;color:#468580;-webkit-text-stroke:0.5px #468580;letter-spacing:0.430px">see the stark beauty of the</div>
<div class="t" style="left:702.2px;top:338.47px;font-size:13.4px;color:#468580;-webkit-text-stroke:0.5px #468580;letter-spacing:0.593px">wrinkled mountain ranges like</div>
<div class="t" style="left:702.2px;top:354.57px;font-size:13.4px;color:#468580;-webkit-text-stroke:0.5px #468580;letter-spacing:0.606px">the Himalayas, contrasting with</div>
<div class="t" style="left:702.2px;top:370.67px;font-size:13.4px;color:#468580;-webkit-text-stroke:0.5px #468580;letter-spacing:0.526px">the delicate tracery of island</div>
<div class="t" style="left:702.2px;top:386.77px;font-size:13.4px;color:#468580;-webkit-text-stroke:0.5px #468580;letter-spacing:0.466px">chains snaking through</div>
<div class="t" style="left:702.2px;top:402.87px;font-size:13.4px;color:#468580;-webkit-text-stroke:0.5px #468580;letter-spacing:0.602px">turquoise waters.</div>
<svg style="left:0;top:0" width="1024" height="568" viewBox="0 0 1024 568">
<rect x="694.7" y="200.4" width="226.1" height="277.1" fill="none" stroke="#4285f4" stroke-width="0.9"/>
<line x1="807.6" y1="188" x2="807.6" y2="200.4" stroke="#4285f4" stroke-width="0.9"/>
<circle cx="807.6" cy="187.6" r="1.9" fill="#4285f4"/>
<g fill="#4285f4">
<rect x="692.7" y="198.4" width="4" height="4"/><rect x="805.6" y="198.4" width="4" height="4"/><rect x="918.8" y="198.4" width="4" height="4"/>
<rect x="692.7" y="337" width="4" height="4"/><rect x="918.8" y="337" width="4" height="4"/>
<rect x="692.7" y="475.5" width="4" height="4"/><rect x="805.6" y="475.5" width="4" height="4"/><rect x="918.8" y="475.5" width="4" height="4"/>
</g>
<rect x="673.8" y="460" width="16.7" height="16.7" rx="3.6" fill="#fff" stroke="#d6e6e4" stroke-width="0.4"/>
<rect x="677.2" y="465.9" width="9.7" height="4.1" fill="#c4c4c4"/>
<path d="M679.3 464.2l6.9 7.3" stroke="#444746" stroke-width="1.2" stroke-linecap="round"/>
</svg><div class="a" style="left:557.9px;top:522px;width:25.4px;height:1.3px;background:#747775;border-radius:1px"></div>
<div class="a" style="left:126px;top:533.8px;width:889.7px;height:25.4px;background:#edf2fa;border-radius:4px"></div>
<div class="t" style="left:134.6px;top:540.7px;font-size:7.8px;color:#1f1f1f">Click to add speaker notes</div>
<div class="a" style="left:1011.5px;top:542.6px;width:21px;height:21px;background:#fff;border-radius:50%;box-shadow:0 1px 2px rgba(60,64,67,.3),0 1px 3px 1px rgba(60,64,67,.15)"></div>
<svg style="left:0;top:0" width="1024" height="568" viewBox="0 0 1024 568"><path d="M1020 550.8l-2.2 2.2 2.2 2.2" fill="none" stroke="#444746" stroke-width="1.1"/></svg>
<div class="a" style="left:125.3px;top:31.2px;width:170.9px;height:179.3px;background:#fff;border-radius:2px;box-shadow:0 1px 3px rgba(60,64,67,.25),0 2px 6px 1px rgba(60,64,67,.12)"></div>
<div class="a" style="left:125.3px;top:67px;width:170.4px;height:19px;background:#eeeff1"></div>
<div class="t" style="left:146px;top:39.64px;font-size:7.8px;color:#1f1f1f;letter-spacing:-0.13px;">Text</div>
<div class="t" style="left:146px;top:56.84px;font-size:7.8px;color:#1f1f1f;letter-spacing:-0.13px;">Align &amp; indent</div>
<div class="t" style="left:146px;top:73.94px;font-size:7.8px;color:#1f1f1f;letter-spacing:-0.13px;">Line &amp; paragraph spacing</div>
<div class="t" style="left:146px;top:90.64px;font-size:7.8px;color:#1f1f1f;letter-spacing:-0.13px;">Bullets &amp; numbering</div>
<div class="t" style="left:146px;top:117.14px;font-size:7.8px;color:#a8abb0;letter-spacing:-0.13px;">Table</div>
<div class="t" style="left:146px;top:134.34px;font-size:7.8px;color:#a8abb0;letter-spacing:-0.13px;">Image</div>
<div class="t" style="left:146px;top:151.14px;font-size:7.8px;color:#1f1f1f;letter-spacing:-0.13px;">Borders &amp; lines</div>
<div class="t" style="left:146px;top:177.44px;font-size:7.8px;color:#1f1f1f;letter-spacing:-0.13px;">Format options</div>
<div class="t" style="left:146px;top:194.24px;font-size:7.8px;color:#1f1f1f;letter-spacing:-0.13px;">Clear formatting</div>
<div class="t" style="left:267.5px;top:194.24px;font-size:7.8px;color:#444746;letter-spacing:-0.13px;">Ctrl+\</div>
<div class="a" style="left:125.3px;top:107px;width:170.4px;height:0.8px;background:#dadce0"></div>
<div class="a" style="left:125.3px;top:166.8px;width:170.4px;height:0.8px;background:#dadce0"></div>
<svg style="left:0;top:0" width="1024" height="568" viewBox="0 0 1024 568">
<path d="M284 40.5l3.3 2-3.3 2z" fill="#757575"/>
<path d="M284 57.7l3.3 2-3.3 2z" fill="#757575"/>
<path d="M284 74.8l3.3 2-3.3 2z" fill="#1f1f1f"/>
<path d="M284 91.5l3.3 2-3.3 2z" fill="#757575"/>
<path d="M284 118.0l3.3 2-3.3 2z" fill="#b8bbbf"/>
<path d="M284 135.2l3.3 2-3.3 2z" fill="#b8bbbf"/>
<path d="M284 152.0l3.3 2-3.3 2z" fill="#757575"/>
<text x="133.4" y="45.6" font-family="Liberation Sans" font-weight="bold" font-size="8.2" fill="#444746">B</text>
<g fill="none" stroke="#444746" stroke-width="0.9"><path d="M132 58.3h8M135.4 60.3h4.6M135.4 62.3h4.6M132 64.3h8"/><path d="M132.6 59.6v2.8l1.6-1.4z" fill="#444746" stroke="none"/></g>
<g fill="none" stroke="#444746" stroke-width="0.9"><path d="M132.6 74.6v5.8M135.2 75.2h4.8M135.2 77.5h4.8M135.2 79.8h4.8"/><path d="M131.2 75.8l1.4-1.6 1.4 1.6zM131.2 79.2l1.4 1.6 1.4-1.6z" fill="#444746" stroke="none"/></g>
<g fill="none" stroke="#444746" stroke-width="0.9"><path d="M132 91.8h1M132 94.1h1M132 96.4h1M134.4 91.8h5.6M134.4 94.1h5.6M134.4 96.4h5.6"/></g>
<g fill="none" stroke="#b8bbbf" stroke-width="0.8"><rect x="132.2" y="118" width="6.8" height="6.4"/><path d="M132.2 120.2h6.8M134.5 120.2v4.2M136.8 120.2v4.2"/></g>
<g fill="none" stroke="#b8bbbf" stroke-width="0.8"><rect x="132.2" y="135.2" width="6.8" height="6.4"/><path d="M133.4 140.4l1.5-1.6 1.2 1 1.8-1.8" /></g>
<path d="M132 154.3h7.4" stroke="#444746" stroke-width="1.1"/>
<g fill="#444746"><rect x="132.2" y="177.6" width="6.6" height="3.2" rx="0.6"/><rect x="134.8" y="181.4" width="1.6" height="3"/></g><path d="M133 178.4h5" stroke="#fff" stroke-width="0.5"/>
<g fill="none" stroke="#444746" stroke-width="0.9"><path d="M133.4 195.4h6.6M136.8 195.4l-1.8 5.6M133.6 195.6l6 5.6"/></g>
</svg><div class="a" style="left:296.1px;top:69.2px;width:142.5px;height:161.5px;background:#fff;border-radius:2px;box-shadow:0 1px 3px rgba(60,64,67,.25),0 2px 6px 1px rgba(60,64,67,.12)"></div>
<div class="a" style="left:296.1px;top:209.7px;width:142.5px;height:19.5px;background:#eeeff1"></div>
<div class="t" style="left:316.9px;top:77.84px;font-size:7.8px;color:#1f1f1f;letter-spacing:-0.13px;">Single</div>
<div class="t" style="left:316.9px;top:94.84px;font-size:7.8px;color:#1f1f1f;letter-spacing:-0.13px;">1.15</div>
<div class="t" style="left:316.9px;top:111.74px;font-size:7.8px;color:#1f1f1f;letter-spacing:-0.13px;">1.5</div>
<div class="t" style="left:316.9px;top:128.84px;font-size:7.8px;color:#1f1f1f;letter-spacing:-0.13px;">Double</div>
<div class="t" style="left:316.9px;top:146.14px;font-size:7.8px;color:#1f1f1f;letter-spacing:-0.13px;">Custom: 0.9</div>
<div class="t" style="left:316.9px;top:172.04px;font-size:7.8px;color:#1f1f1f;letter-spacing:-0.13px;">Remove space before paragraph</div>
<div class="t" style="left:316.9px;top:189.24px;font-size:7.8px;color:#1f1f1f;letter-spacing:-0.13px;">Add space after paragraph</div>
<div class="t" style="left:316.9px;top:215.24px;font-size:7.8px;color:#1f1f1f;letter-spacing:-0.13px;">Custom spacing</div>
<div class="a" style="left:296.1px;top:161.6px;width:142.5px;height:0.8px;background:#dadce0"></div>
<div class="a" style="left:296.1px;top:205px;width:142.5px;height:0.8px;background:#dadce0"></div>
<svg style="left:0;top:0" width="1024" height="568" viewBox="0 0 1024 568"><path d="M305 148.6l2.2 2.3 4.2-4.6" fill="none" stroke="#444746" stroke-width="0.9"/></svg><div class="a" style="left:125.6px;top:65.2px;width:168.4px;height:22.8px;border:3px solid #1a5cf4;border-radius:5px"></div>
<div class="a" style="left:300.8px;top:70.9px;width:133.8px;height:157.8px;border:3px solid #1a5cf4;border-radius:5px"></div>
<svg style="left:0;top:0" width="1024" height="568" viewBox="0 0 1024 568"><path d="M128 28.8L128.8 47.6L125.8 45L57.6 213.8L117.8 43L113.8 42.2Z" fill="#1a5cf4"/></svg>
</body></html>
